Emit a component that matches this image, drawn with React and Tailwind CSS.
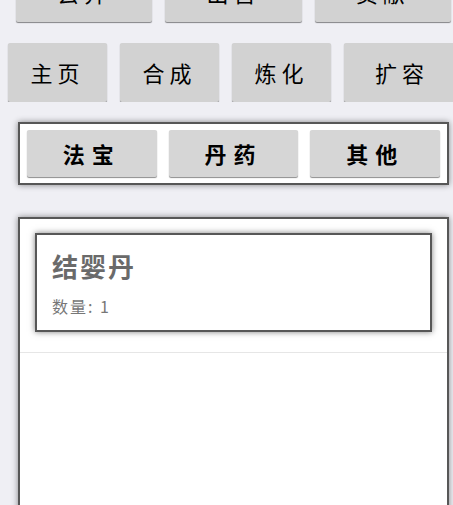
import React from "react";

const font = { fontFamily: '"Noto Sans CJK SC", "Noto Sans", sans-serif' };

const topRow = ["去异", "出售", "贡献"];
const navRow = [
  { label: "主页", w: "w-[99px]" },
  { label: "合成", w: "w-[99px]" },
  { label: "炼化", w: "w-[99px]" },
  { label: "扩容", w: "w-[116px]" },
];
const tabs = ["法宝", "丹药", "其他"];

const App = () => {
  return (
    <div
      style={font}
      className="h-[505px] w-full overflow-hidden bg-[#efeff4] text-black"
    >
      {/* top row, scrolled partly out of view */}
      <div className="-mt-[38px] flex gap-[13px] pl-4 pr-[2px]">
        {topRow.map((t) => (
          <button
            key={t}
            className="flex h-[60px] flex-1 items-center justify-center rounded-[2px] bg-[#d2d2d2] text-[22px] tracking-[5px] shadow-[0_1px_1px_rgba(0,0,0,0.45)]"
          >
            {t}
          </button>
        ))}
      </div>

      {/* nav row */}
      <div className="mt-[21px] flex gap-[13px] overflow-hidden pl-2">
        {navRow.map((b) => (
          <button
            key={b.label}
            className={`flex h-[59px] shrink-0 items-center justify-center rounded-[2px] bg-[#d2d2d2] text-[22px] tracking-[5px] shadow-[0_1px_1px_rgba(0,0,0,0.45)] ${b.w}`}
          >
            {b.label}
          </button>
        ))}
      </div>

      {/* category tabs */}
      <div className="ml-[18px] mr-[4px] mt-[20px] flex gap-3 border-2 border-[#575757] bg-white px-[7px] py-[6px] shadow-[0_0_6px_rgba(0,0,0,0.45)]">
        {tabs.map((t) => (
          <button
            key={t}
            className="flex h-[47px] flex-1 items-center justify-center rounded-[2px] bg-[#d6d6d6] text-[22px] font-bold tracking-[7px] shadow-[0_1px_1px_rgba(0,0,0,0.45)]"
          >
            {t}
          </button>
        ))}
      </div>

      {/* item list */}
      <div className="ml-[18px] mr-[4px] mt-[32px] h-[300px] border-2 border-[#575757] bg-white shadow-[0_0_6px_rgba(0,0,0,0.45)]">
        <div className="mx-[15px] mt-[14px] border-2 border-[#575757] bg-white px-[15px] pb-[13px] pt-[14px] shadow-[0_0_6px_rgba(0,0,0,0.5)]">
          <div className="text-[26px] font-bold leading-[34px] tracking-[2px] text-[#6a6a6a]">
            结婴丹
          </div>
          <div className="mt-[12px] text-[16px] leading-[22px] tracking-[2px] text-[#777777]">
            数量: 1
          </div>
        </div>
        <div className="mt-[20px] h-px bg-[#e6e6e6]" />
      </div>
    </div>
  );
};

export default App;
